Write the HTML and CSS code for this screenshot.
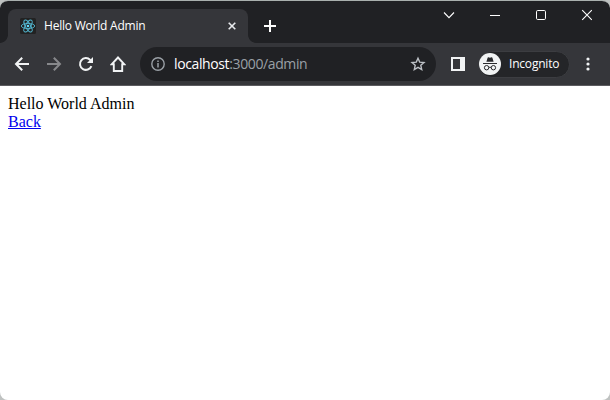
FILE: index.html
```html
<!DOCTYPE html>
<html lang="en">
<head>
<meta charset="utf-8">
<title>Hello World Admin</title>
<link rel="stylesheet" href="styles.css">
</head>
<body>
<div class="window">
  <header class="tabstrip">
    <div class="tab">
      <svg class="favicon" width="16" height="16" viewBox="0 0 16 16"><rect width="16" height="16" rx="1.5" fill="#222"/><g fill="none" stroke="#53b9d3" stroke-width=".9"><ellipse cx="8" cy="8" rx="6.7" ry="2.6"/><ellipse cx="8" cy="8" rx="6.7" ry="2.6" transform="rotate(60 8 8)"/><ellipse cx="8" cy="8" rx="6.7" ry="2.6" transform="rotate(120 8 8)"/></g><circle cx="8" cy="8" r="1.3" fill="#61dafb"/></svg>
      <span class="tab-title">Hello World Admin</span>
      <svg class="tab-close" width="8" height="8" viewBox="0 0 8 8"><path d="M.7.7l6.6 6.6M7.3.7L.7 7.3" stroke="#e8eaed" stroke-width="1.6"/></svg>
    </div>
    <svg class="new-tab" width="12" height="12" viewBox="0 0 12 12"><path d="M6 0v12M0 6h12" stroke="#fff" stroke-width="2"/></svg>
    <div class="controls">
      <svg width="46" height="28" viewBox="0 0 46 28"><path d="M18 11.5l5 5.2 5-5.2" fill="none" stroke="#fff" stroke-width="1.1"/></svg>
      <svg width="46" height="28" viewBox="0 0 46 28"><path d="M18 14.5h10" stroke="#fff" stroke-width="1"/></svg>
      <svg width="46" height="28" viewBox="0 0 46 28"><rect x="18.5" y="9.5" width="9" height="9" rx="1.2" fill="none" stroke="#fff"/></svg>
      <svg width="46" height="28" viewBox="0 0 46 28"><path d="M18.2 9.2l9.6 9.6M27.8 9.2l-9.6 9.6" stroke="#fff" stroke-width="1.1"/></svg>
    </div>
  </header>
  <nav class="toolbar">
    <div class="nav-buttons">
      <svg width="16" height="16" viewBox="0 0 16 16"><path d="M15 8H2.4M8.2 1.7L2 8l6.2 6.3" fill="none" stroke="#f1f3f4" stroke-width="2"/></svg>
      <svg width="16" height="16" viewBox="0 0 16 16"><path d="M1 8h12.6M7.8 1.7L14 8l-6.2 6.3" fill="none" stroke="#87888b" stroke-width="2"/></svg>
      <svg width="16" height="16" viewBox="0 0 16 16"><path d="M13.4 10.1A5.9 5.9 0 1 1 12.2 3.9L14 5.7" fill="none" stroke="#f1f3f4" stroke-width="2"/><path d="M15 1v6H9z" fill="#f1f3f4"/></svg>
      <svg width="16" height="16" viewBox="0 0 16 16"><path d="M8 1.5L1.8 8.2H3.8V15h8.4V8.2h2z" fill="none" stroke="#f1f3f4" stroke-width="1.9"/></svg>
    </div>
    <div class="address">
      <svg width="14" height="14" viewBox="0 0 14 14"><circle cx="7" cy="7" r="6.2" fill="none" stroke="#9aa0a6" stroke-width="1.4"/><path d="M7 6v4.5M7 3.4v1.5" stroke="#9aa0a6" stroke-width="1.5"/></svg>
      <span class="url"><b>localhost</b>:3000/admin</span>
      <svg class="star" width="16" height="16" viewBox="0 0 16 16"><path d="M8 2.2l1.7 3.9 4.3.4-3.2 2.8.9 4.2L8 11.3l-3.7 2.2.9-4.2L2 6.5l4.3-.4z" fill="none" stroke="#bdc1c6" stroke-width="1.4"/></svg>
    </div>
    <svg class="panel" width="14" height="14" viewBox="0 0 14 14"><path fill="#f1f3f4" fill-rule="evenodd" d="M0 0h14v14H0zM2 2v10h7V2z"/></svg>
    <div class="profile">
      <svg width="22" height="22" viewBox="0 0 22 22"><circle cx="11" cy="11" r="11" fill="#f1f3f4"/><path d="M7.4 8.7l1.2-4q.2-.6.8-.4l1.6.5 1.6-.5q.6-.2.8.4l1.2 4z" fill="#28292c"/><path d="M4 10.5h14" stroke="#28292c" stroke-width="1.2"/><g fill="none" stroke="#28292c" stroke-width="1"><circle cx="7.6" cy="14.7" r="2.2"/><circle cx="14.4" cy="14.7" r="2.2"/><path d="M9.8 14.5q1.2-.7 2.4 0"/></g></svg>
      <span>Incognito</span>
    </div>
    <svg class="menu" width="4" height="14" viewBox="0 0 4 14" fill="#f1f3f4"><circle cx="2" cy="2" r="1.6"/><circle cx="2" cy="7" r="1.6"/><circle cx="2" cy="12" r="1.6"/></svg>
  </nav>
  <main class="page">
    <div>Hello World Admin</div>
    <a href="#">Back</a>
  </main>
</div>
</body>
</html>
```
FILE: styles.css
```css
* { box-sizing: border-box; }
body { margin: 0; background: #bfc2c1; overflow: hidden; }
svg { display: block; flex: none; }
.window {
  height: 400px;
  display: flex;
  flex-direction: column;
  border-top: 1px solid #a9b0ae;
  border-radius: 8px;
  overflow: hidden;
  background: #fff;
}
.tabstrip {
  height: 42px;
  flex: none;
  display: flex;
  background: #202124;
  padding: 8px 0 0 8px;
  font: 12px "Open Sans", "Noto Sans", sans-serif;
}
.tab {
  position: relative;
  width: 240px;
  height: 34px;
  display: flex;
  align-items: center;
  padding: 0 12px;
  background: #35363a;
  border-radius: 8px 8px 0 0;
  color: #fff;
}
.tab::before, .tab::after {
  content: "";
  position: absolute;
  bottom: 0;
  width: 8px;
  height: 8px;
}
.tab::before { left: -8px; background: radial-gradient(circle at 0 0, transparent 7.5px, #35363a 8.2px); }
.tab::after { right: -8px; background: radial-gradient(circle at 100% 0, transparent 7.5px, #35363a 8.2px); }
.tab-title { margin-left: 8px; padding-bottom: 2px; white-space: nowrap; letter-spacing: -0.22px; }
.tab-close { margin-left: auto; }
.new-tab { margin: 11px 0 0 16px; }
.controls { display: flex; margin: -8px 0 0 auto; }
.toolbar {
  height: 43px;
  flex: none;
  display: flex;
  align-items: center;
  padding: 0 20px 0 14px;
  background: #35363a;
  border-bottom: 1px solid #5b5b5f;
  color: #fff;
}
.nav-buttons { display: flex; gap: 16px; }
.address {
  width: 296px;
  height: 34px;
  display: flex;
  align-items: center;
  margin-left: 14px;
  padding: 0 10px 0 11px;
  border-radius: 17px;
  background: #202124;
}
.url {
  margin-left: 9px;
  padding-bottom: 1px;
  font: 14px "Open Sans", "Noto Sans", sans-serif;
  letter-spacing: -0.38px;
  color: #9aa0a6;
  white-space: nowrap;
}
.url b { font-weight: 500; color: #fff; }
.star { margin-left: auto; }
.panel { margin-left: 15px; }
.profile {
  width: 92px;
  height: 27px;
  display: flex;
  align-items: center;
  margin-left: 13px;
  border: 1px solid #3c3d41;
  border-radius: 14px;
  background: #242528;
  font: 12px "Open Sans", "Noto Sans", sans-serif;
}
.profile span { margin-left: 8px; padding-bottom: 2px; letter-spacing: -0.2px; }
.menu { margin-left: auto; }
.page { padding: 9px 8px; font: 16px/18px "Liberation Serif", serif; color: #000; }
.page a { color: #0000ee; text-decoration: underline; }
```
